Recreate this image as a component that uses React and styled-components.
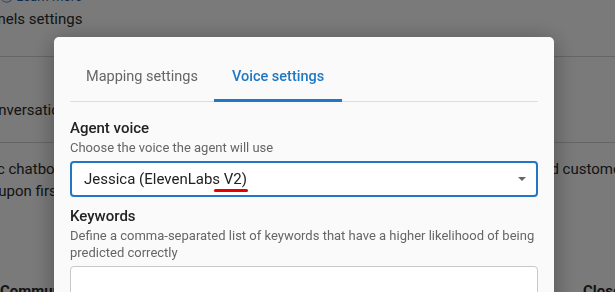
import styled, { createGlobalStyle } from "styled-components";

const GlobalStyle = createGlobalStyle`
  html, body {
    margin: 0;
    padding: 0;
    background: #ffffff;
    font-family: Roboto, "Noto Sans", sans-serif;
    overflow: hidden;
  }
`;

const Page = styled.div`
  width: 615px;
  height: 292px;
  position: relative;
  overflow: hidden;
  color: #2a2a2a;
`;

const Backdrop = styled.div`
  margin-left: -40px;
  width: 720px;
`;

const TopLink = styled.div`
  height: 8px;
  display: flex;
  align-items: flex-end;
  gap: 4px;
  padding-left: 40px;
  font-size: 13px;
  color: #1f5fa8;
  line-height: 10px;
  margin-top: -6px;
`;

const PageTitle = styled.h2`
  margin: 0;
  font-size: 15px;
  font-weight: 400;
  line-height: 22px;
  padding-top: 6px;
  height: 48px;
  border-bottom: 1px solid #d4d4d4;
  padding-left: 3px;
`;

const Section = styled.div`
  height: 86px;
  border-bottom: 1px solid #d4d4d4;
  display: flex;
  align-items: flex-end;
  padding: 0 0 23px 20px;
  box-sizing: border-box;
  font-size: 15px;
`;

const Columns = styled.div`
  display: grid;
  grid-template-columns: 590px 200px;
  padding-top: 15px;
  font-size: 15px;
  line-height: 22px;
`;

const Para = styled.div`
  height: 122px;
  white-space: nowrap;
`;

const Line = styled.div`
  margin-left: ${(p) => p.$indent || 0}px;
`;

const BoldCell = styled.div`
  font-weight: 700;
  font-size: 15px;
  padding-left: ${(p) => p.$indent || 0}px;
`;

const Overlay = styled.div`
  position: fixed;
  inset: 0;
  background: rgba(0, 0, 0, 0.52);
`;

const Modal = styled.div`
  position: fixed;
  left: 54px;
  top: 37px;
  width: 500px;
  height: 400px;
  background: #fafafa;
  border-radius: 5px;
  padding: 15px 16px 0;
  box-sizing: border-box;
  box-shadow: 0 4px 24px rgba(0, 0, 0, 0.35);
`;

const Tabs = styled.div`
  display: flex;
  border-bottom: 1px solid #dcdcdc;
  height: 50px;
  box-sizing: border-box;
`;

const Tab = styled.div`
  padding: 0 ${(p) => (p.$active ? 18 : 16)}px;
  display: flex;
  align-items: center;
  font-size: 14.5px;
  font-weight: ${(p) => (p.$active ? 500 : 400)};
  color: ${(p) => (p.$active ? "#1f78c1" : "#666")};
  border-bottom: 3px solid ${(p) => (p.$active ? "#1f78c1" : "transparent")};
  margin-bottom: -1px;
  padding-top: 1px;
`;

const Field = styled.div`
  margin-top: ${(p) => p.$top}px;
`;

const Label = styled.div`
  font-size: 15px;
  font-weight: 500;
  color: #222;
  line-height: 20px;
`;

const Hint = styled.div`
  font-size: 13px;
  color: #666;
  line-height: 17px;
  margin-top: 1px;
`;

const Select = styled.div`
  position: relative;
  margin-top: 5px;
  height: 36px;
  border: 2px solid #1f78c1;
  border-radius: 4px;
  box-sizing: border-box;
  display: flex;
  align-items: center;
  justify-content: space-between;
  padding: 0 12px;
  font-size: 15px;
  color: #222;
  background: #fff;
`;

const Caret = styled.span`
  width: 0;
  height: 0;
  border-left: 4px solid transparent;
  border-right: 4px solid transparent;
  border-top: 4px solid #666;
  margin-right: -2px;
`;

const Mark = styled.span`
  position: absolute;
  left: 142px;
  top: 26px;
  width: 34px;
  height: 3px;
  border-radius: 2px;
  background: #e60000;
`;

const TextArea = styled.div`
  margin-top: 5px;
  height: 80px;
  border: 1px solid #c8c8c8;
  border-radius: 4px;
  background: #fff;
`;

export default function App() {
  return (
    <Page>
      <GlobalStyle />
      <Backdrop>
        <TopLink>ⓘ Learn more</TopLink>
        <PageTitle>Channels settings</PageTitle>
        <Section>Conversations</Section>
        <Columns>
          <Para>
            <Line $indent={8}>Basic chatbot greeting shown to visitors</Line>
            <Line $indent={-14}>Replies upon first contact</Line>
          </Para>
          <Para>
            <Line $indent={-16}>and customers</Line>
          </Para>
          <BoldCell $indent={40}>Communication</BoldCell>
          <BoldCell $indent={33}>Close</BoldCell>
        </Columns>
      </Backdrop>
      <Overlay />
      <Modal>
        <Tabs>
          <Tab>Mapping settings</Tab>
          <Tab $active>Voice settings</Tab>
        </Tabs>
        <Field $top={16}>
          <Label>Agent voice</Label>
          <Hint>Choose the voice the agent will use</Hint>
          <Select>
            <span>Jessica (ElevenLabs V2)</span>
            <Caret />
            <Mark />
          </Select>
        </Field>
        <Field $top={9}>
          <Label>Keywords</Label>
          <Hint>
            Define a comma-separated list of keywords that have a higher likelihood of being
            predicted correctly
          </Hint>
          <TextArea />
        </Field>
      </Modal>
    </Page>
  );
}
